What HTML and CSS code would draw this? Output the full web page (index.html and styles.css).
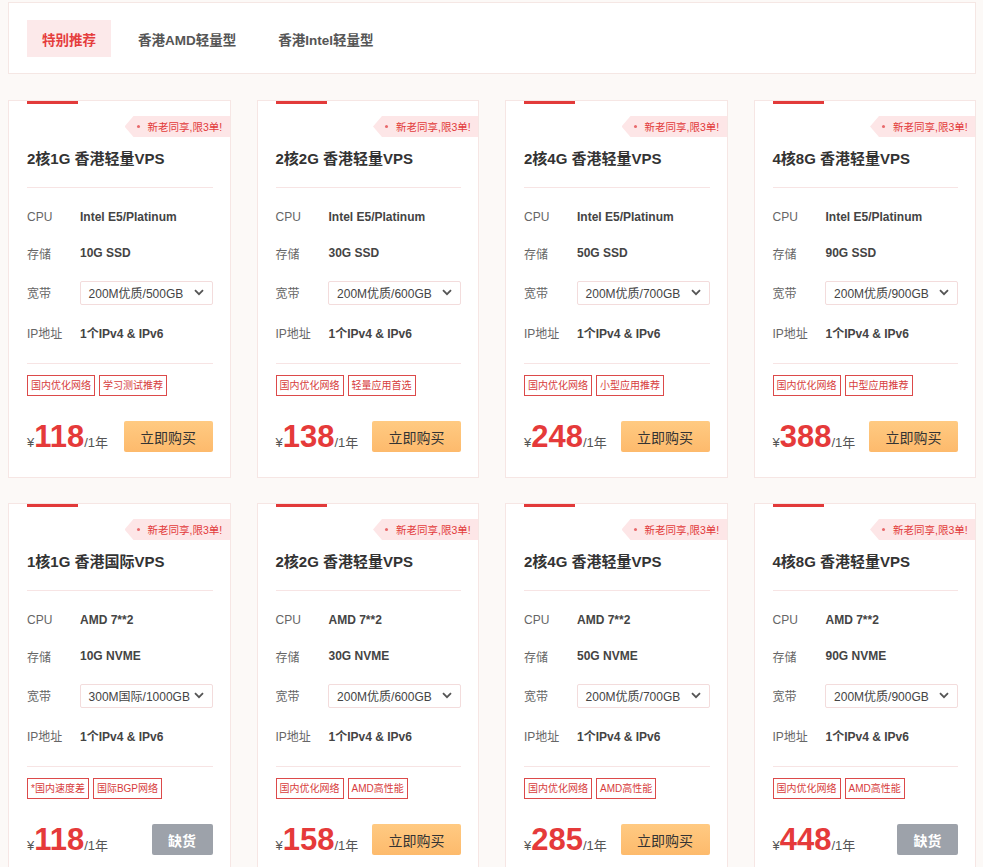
FILE: index.html
```html
<!DOCTYPE html>
<html lang="zh-CN">
<head>
  <meta charset="UTF-8">
  <meta name="viewport" content="width=device-width, initial-scale=1.0">
  <title>香港轻量VPS</title>
  <link rel="stylesheet" href="styles.css">
</head>
<body>

  <!-- tabs -->
  <div class="tab-box">
    <span class="tab active">特别推荐</span>
    <span class="tab">香港AMD轻量型</span>
    <span class="tab">香港Intel轻量型</span>
  </div>

  <div class="product-grid">

    <!-- Intel row -->
    <div class="product-card">
      <div class="card-bar"></div>
      <div class="promo"><i></i>新老同享,限3单!</div>
      <div class="card-title">2核1G 香港轻量VPS</div>
      <div class="spec-list">
        <div class="spec-row"><span class="spec-label">CPU</span><span class="spec-value">Intel E5/Platinum</span></div>
        <div class="spec-row"><span class="spec-label">存储</span><span class="spec-value">10G SSD</span></div>
        <div class="spec-row tall"><span class="spec-label">宽带</span>
          <div class="select"><span>200M优质/500GB</span><svg width="10" height="7" viewBox="0 0 10 7"><path d="M1 1.2 5 5.2 9 1.2" fill="none" stroke="#555" stroke-width="1.8"/></svg></div>
        </div>
        <div class="spec-row"><span class="spec-label">IP地址</span><span class="spec-value">1个IPv4 &amp; IPv6</span></div>
      </div>
      <div class="tags"><span class="tag">国内优化网络</span><span class="tag">学习测试推荐</span></div>
      <div class="card-foot">
        <div class="price"><span class="yen">¥</span><span class="num">118</span><span class="unit">/1年</span></div>
        <button class="buy-button">立即购买</button>
      </div>
    </div>

    <div class="product-card">
      <div class="card-bar"></div>
      <div class="promo"><i></i>新老同享,限3单!</div>
      <div class="card-title">2核2G 香港轻量VPS</div>
      <div class="spec-list">
        <div class="spec-row"><span class="spec-label">CPU</span><span class="spec-value">Intel E5/Platinum</span></div>
        <div class="spec-row"><span class="spec-label">存储</span><span class="spec-value">30G SSD</span></div>
        <div class="spec-row tall"><span class="spec-label">宽带</span>
          <div class="select"><span>200M优质/600GB</span><svg width="10" height="7" viewBox="0 0 10 7"><path d="M1 1.2 5 5.2 9 1.2" fill="none" stroke="#555" stroke-width="1.8"/></svg></div>
        </div>
        <div class="spec-row"><span class="spec-label">IP地址</span><span class="spec-value">1个IPv4 &amp; IPv6</span></div>
      </div>
      <div class="tags"><span class="tag">国内优化网络</span><span class="tag">轻量应用首选</span></div>
      <div class="card-foot">
        <div class="price"><span class="yen">¥</span><span class="num">138</span><span class="unit">/1年</span></div>
        <button class="buy-button">立即购买</button>
      </div>
    </div>

    <div class="product-card">
      <div class="card-bar"></div>
      <div class="promo"><i></i>新老同享,限3单!</div>
      <div class="card-title">2核4G 香港轻量VPS</div>
      <div class="spec-list">
        <div class="spec-row"><span class="spec-label">CPU</span><span class="spec-value">Intel E5/Platinum</span></div>
        <div class="spec-row"><span class="spec-label">存储</span><span class="spec-value">50G SSD</span></div>
        <div class="spec-row tall"><span class="spec-label">宽带</span>
          <div class="select"><span>200M优质/700GB</span><svg width="10" height="7" viewBox="0 0 10 7"><path d="M1 1.2 5 5.2 9 1.2" fill="none" stroke="#555" stroke-width="1.8"/></svg></div>
        </div>
        <div class="spec-row"><span class="spec-label">IP地址</span><span class="spec-value">1个IPv4 &amp; IPv6</span></div>
      </div>
      <div class="tags"><span class="tag">国内优化网络</span><span class="tag">小型应用推荐</span></div>
      <div class="card-foot">
        <div class="price"><span class="yen">¥</span><span class="num">248</span><span class="unit">/1年</span></div>
        <button class="buy-button">立即购买</button>
      </div>
    </div>

    <div class="product-card">
      <div class="card-bar"></div>
      <div class="promo"><i></i>新老同享,限3单!</div>
      <div class="card-title">4核8G 香港轻量VPS</div>
      <div class="spec-list">
        <div class="spec-row"><span class="spec-label">CPU</span><span class="spec-value">Intel E5/Platinum</span></div>
        <div class="spec-row"><span class="spec-label">存储</span><span class="spec-value">90G SSD</span></div>
        <div class="spec-row tall"><span class="spec-label">宽带</span>
          <div class="select"><span>200M优质/900GB</span><svg width="10" height="7" viewBox="0 0 10 7"><path d="M1 1.2 5 5.2 9 1.2" fill="none" stroke="#555" stroke-width="1.8"/></svg></div>
        </div>
        <div class="spec-row"><span class="spec-label">IP地址</span><span class="spec-value">1个IPv4 &amp; IPv6</span></div>
      </div>
      <div class="tags"><span class="tag">国内优化网络</span><span class="tag">中型应用推荐</span></div>
      <div class="card-foot">
        <div class="price"><span class="yen">¥</span><span class="num">388</span><span class="unit">/1年</span></div>
        <button class="buy-button">立即购买</button>
      </div>
    </div>

    <!-- AMD row -->
    <div class="product-card">
      <div class="card-bar"></div>
      <div class="promo"><i></i>新老同享,限3单!</div>
      <div class="card-title">1核1G 香港国际VPS</div>
      <div class="spec-list">
        <div class="spec-row"><span class="spec-label">CPU</span><span class="spec-value">AMD 7**2</span></div>
        <div class="spec-row"><span class="spec-label">存储</span><span class="spec-value">10G NVME</span></div>
        <div class="spec-row tall"><span class="spec-label">宽带</span>
          <div class="select"><span>300M国际/1000GB</span><svg width="10" height="7" viewBox="0 0 10 7"><path d="M1 1.2 5 5.2 9 1.2" fill="none" stroke="#555" stroke-width="1.8"/></svg></div>
        </div>
        <div class="spec-row"><span class="spec-label">IP地址</span><span class="spec-value">1个IPv4 &amp; IPv6</span></div>
      </div>
      <div class="tags"><span class="tag">*国内速度差</span><span class="tag">国际BGP网络</span></div>
      <div class="card-foot">
        <div class="price"><span class="yen">¥</span><span class="num">118</span><span class="unit">/1年</span></div>
        <button class="buy-button sold-out">缺货</button>
      </div>
    </div>

    <div class="product-card">
      <div class="card-bar"></div>
      <div class="promo"><i></i>新老同享,限3单!</div>
      <div class="card-title">2核2G 香港轻量VPS</div>
      <div class="spec-list">
        <div class="spec-row"><span class="spec-label">CPU</span><span class="spec-value">AMD 7**2</span></div>
        <div class="spec-row"><span class="spec-label">存储</span><span class="spec-value">30G NVME</span></div>
        <div class="spec-row tall"><span class="spec-label">宽带</span>
          <div class="select"><span>200M优质/600GB</span><svg width="10" height="7" viewBox="0 0 10 7"><path d="M1 1.2 5 5.2 9 1.2" fill="none" stroke="#555" stroke-width="1.8"/></svg></div>
        </div>
        <div class="spec-row"><span class="spec-label">IP地址</span><span class="spec-value">1个IPv4 &amp; IPv6</span></div>
      </div>
      <div class="tags"><span class="tag">国内优化网络</span><span class="tag">AMD高性能</span></div>
      <div class="card-foot">
        <div class="price"><span class="yen">¥</span><span class="num">158</span><span class="unit">/1年</span></div>
        <button class="buy-button">立即购买</button>
      </div>
    </div>

    <div class="product-card">
      <div class="card-bar"></div>
      <div class="promo"><i></i>新老同享,限3单!</div>
      <div class="card-title">2核4G 香港轻量VPS</div>
      <div class="spec-list">
        <div class="spec-row"><span class="spec-label">CPU</span><span class="spec-value">AMD 7**2</span></div>
        <div class="spec-row"><span class="spec-label">存储</span><span class="spec-value">50G NVME</span></div>
        <div class="spec-row tall"><span class="spec-label">宽带</span>
          <div class="select"><span>200M优质/700GB</span><svg width="10" height="7" viewBox="0 0 10 7"><path d="M1 1.2 5 5.2 9 1.2" fill="none" stroke="#555" stroke-width="1.8"/></svg></div>
        </div>
        <div class="spec-row"><span class="spec-label">IP地址</span><span class="spec-value">1个IPv4 &amp; IPv6</span></div>
      </div>
      <div class="tags"><span class="tag">国内优化网络</span><span class="tag">AMD高性能</span></div>
      <div class="card-foot">
        <div class="price"><span class="yen">¥</span><span class="num">285</span><span class="unit">/1年</span></div>
        <button class="buy-button">立即购买</button>
      </div>
    </div>

    <div class="product-card">
      <div class="card-bar"></div>
      <div class="promo"><i></i>新老同享,限3单!</div>
      <div class="card-title">4核8G 香港轻量VPS</div>
      <div class="spec-list">
        <div class="spec-row"><span class="spec-label">CPU</span><span class="spec-value">AMD 7**2</span></div>
        <div class="spec-row"><span class="spec-label">存储</span><span class="spec-value">90G NVME</span></div>
        <div class="spec-row tall"><span class="spec-label">宽带</span>
          <div class="select"><span>200M优质/900GB</span><svg width="10" height="7" viewBox="0 0 10 7"><path d="M1 1.2 5 5.2 9 1.2" fill="none" stroke="#555" stroke-width="1.8"/></svg></div>
        </div>
        <div class="spec-row"><span class="spec-label">IP地址</span><span class="spec-value">1个IPv4 &amp; IPv6</span></div>
      </div>
      <div class="tags"><span class="tag">国内优化网络</span><span class="tag">AMD高性能</span></div>
      <div class="card-foot">
        <div class="price"><span class="yen">¥</span><span class="num">448</span><span class="unit">/1年</span></div>
        <button class="buy-button sold-out">缺货</button>
      </div>
    </div>

  </div>

</body>
</html>
```

FILE: styles.css
```css
/* page */
body {
  margin: 0;
  padding: 2px 7px 0 8px;
  background-color: #fcf9f7;
  font-family: "Liberation Sans", "Noto Sans CJK SC", sans-serif;
  color: #333;
}

/* tab bar */
.tab-box {
  display: flex;
  gap: 12px;
  height: 72px;
  box-sizing: border-box;
  padding: 17px 18px;
  background-color: #fff;
  border: 1px solid #f5e7e4;
}

.tab {
  display: flex;
  align-items: center;
  height: 37px;
  padding: 0 15px;
  font-size: 13.5px;
  font-weight: bold;
  color: #555;
}

.tab.active {
  background-color: #fce9ea;
  color: #e53d3d;
}

/* product cards */
.product-grid {
  display: grid;
  grid-template-columns: repeat(4, 1fr);
  column-gap: 26px;
  row-gap: 25px;
  margin-top: 26px;
}

.product-card {
  background-color: #fff;
  border: 1px solid #f6e6e4;
  padding: 0 17px 25px 18px;
  overflow: hidden;
}

.card-bar {
  width: 51px;
  height: 4px;
  margin-top: -1px;
  background-color: #e23a3a;
}

.promo {
  display: flex;
  align-items: center;
  width: 106px;
  height: 21px;
  box-sizing: border-box;
  margin: 12px -18px 0 auto;
  padding-left: 23px;
  background-color: #fde6e7;
  clip-path: polygon(9px 0, 100% 0, 100% 100%, 9px 100%, 0 50%);
  font-size: 10.5px;
  color: #e23a3a;
  white-space: nowrap;
  position: relative;
}

.promo i {
  position: absolute;
  left: 12px;
  top: 9px;
  width: 3px;
  height: 3px;
  border-radius: 50%;
  background-color: #e8696b;
}

.card-title {
  margin-top: 11px;
  padding-bottom: 17px;
  border-bottom: 1px solid #f7e4e4;
  font-size: 15px;
  line-height: 22px;
  font-weight: bold;
  color: #333;
}

/* specs */
.spec-list {
  padding: 11px 0 13px;
  border-bottom: 1px solid #f7e4e4;
}

.spec-row {
  display: flex;
  align-items: center;
  height: 36px;
  font-size: 12px;
}

.spec-row.tall {
  height: 43px;
}

.spec-label {
  width: 53px;
  color: #666;
}

.spec-value {
  font-weight: bold;
  color: #444;
}

.select {
  display: flex;
  align-items: center;
  justify-content: space-between;
  width: 134px;
  height: 24px;
  box-sizing: border-box;
  padding: 0 8px 0 8px;
  border: 1px solid #f3dcdc;
  border-radius: 2px;
  font-size: 12px;
  color: #444;
}

/* tags */
.tags {
  display: flex;
  gap: 4px;
  margin-top: 11px;
}

.tag {
  height: 21px;
  line-height: 19px;
  box-sizing: border-box;
  padding: 0 3px;
  border: 1px solid #dc4a4a;
  font-size: 10px;
  color: #d73c3c;
  white-space: nowrap;
}

/* price + button */
.card-foot {
  display: flex;
  align-items: center;
  justify-content: space-between;
  margin-top: 25px;
}

.price {
  display: flex;
  align-items: baseline;
  color: #555;
}

.yen {
  font-size: 13px;
}

.num {
  font-size: 31px;
  font-weight: bold;
  color: #e53a3a;
  line-height: 31px;
}

.unit {
  font-size: 13px;
  color: #555;
}

.buy-button {
  width: 89px;
  height: 31px;
  border: none;
  border-radius: 2px;
  background: linear-gradient(to bottom, #ffca82, #fdba6c);
  font-family: inherit;
  font-size: 14px;
  color: #333;
  cursor: pointer;
}

.buy-button.sold-out {
  width: 61px;
  background: #9da2aa;
  color: #fff;
  font-weight: bold;
  cursor: default;
}
```
